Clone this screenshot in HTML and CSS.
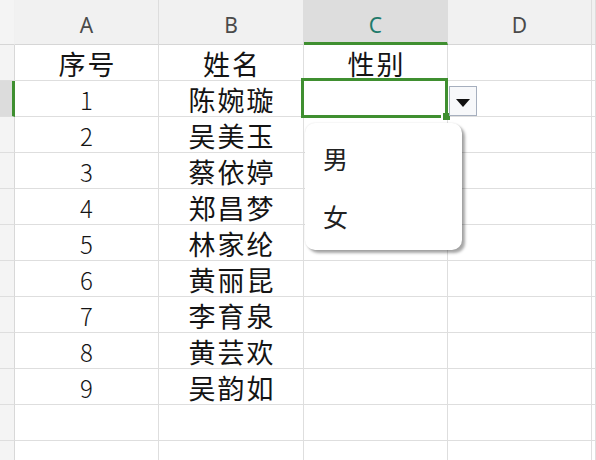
FILE: index.html
```html
<!DOCTYPE html>
<html lang="zh-CN">
<head>
<meta charset="utf-8">
<title>性别下拉</title>
<link rel="stylesheet" href="styles.css">
</head>
<body>
<div class="sheet">
  <div class="row head">
    <div class="rh"></div>
    <div class="ch">A</div>
    <div class="ch">B</div>
    <div class="ch active">C</div>
    <div class="ch">D</div>
    <div class="ch"></div>
  </div>
  <div class="row">
    <div class="rh"></div>
    <div class="cell">序号</div>
    <div class="cell">姓名</div>
    <div class="cell">性别</div>
    <div class="cell"></div>
    <div class="cell"></div>
  </div>
  <div class="row">
    <div class="rh cur"></div>
    <div class="cell num">1</div>
    <div class="cell">陈婉璇</div>
    <div class="cell sel"><span class="handle"></span></div>
    <div class="cell"><span class="dd"><span class="tri"></span></span></div>
    <div class="cell"></div>
  </div>
  <div class="row"><div class="rh"></div><div class="cell num">2</div><div class="cell">吴美玉</div><div class="cell"></div><div class="cell"></div><div class="cell"></div></div>
  <div class="row"><div class="rh"></div><div class="cell num">3</div><div class="cell">蔡依婷</div><div class="cell"></div><div class="cell"></div><div class="cell"></div></div>
  <div class="row"><div class="rh"></div><div class="cell num">4</div><div class="cell">郑昌梦</div><div class="cell"></div><div class="cell"></div><div class="cell"></div></div>
  <div class="row"><div class="rh"></div><div class="cell num">5</div><div class="cell">林家纶</div><div class="cell"></div><div class="cell"></div><div class="cell"></div></div>
  <div class="row"><div class="rh"></div><div class="cell num">6</div><div class="cell">黄丽昆</div><div class="cell"></div><div class="cell"></div><div class="cell"></div></div>
  <div class="row"><div class="rh"></div><div class="cell num">7</div><div class="cell">李育泉</div><div class="cell"></div><div class="cell"></div><div class="cell"></div></div>
  <div class="row"><div class="rh"></div><div class="cell num">8</div><div class="cell">黄芸欢</div><div class="cell"></div><div class="cell"></div><div class="cell"></div></div>
  <div class="row"><div class="rh"></div><div class="cell num">9</div><div class="cell">吴韵如</div><div class="cell"></div><div class="cell"></div><div class="cell"></div></div>
  <div class="row"><div class="rh"></div><div class="cell"></div><div class="cell"></div><div class="cell"></div><div class="cell"></div><div class="cell"></div></div>
  <div class="row"><div class="rh"></div><div class="cell"></div><div class="cell"></div><div class="cell"></div><div class="cell"></div><div class="cell"></div></div>
</div>
<div class="menu">
  <div class="item">男</div>
  <div class="item">女</div>
</div>
</body>
</html>
```
FILE: styles.css
```css
html, body {
  margin: 0;
  padding: 0;
  background: #ffffff;
  overflow: hidden;
}
body {
  width: 596px;
  height: 460px;
  position: relative;
  font-family: "Noto Sans CJK SC", "Noto Sans", sans-serif;
  color: #141414;
}
.sheet {
  display: flex;
  flex-direction: column;
}
.row {
  display: grid;
  grid-template-columns: 15px 144px 145px 144px 144px 4px;
  grid-template-rows: 36px;
  height: 36px;
  flex: none;
}
.row.head {
  grid-template-rows: 45px;
  height: 45px;
}
.rh, .cell, .ch {
  box-sizing: border-box;
  border-right: 1px solid #dedede;
  border-bottom: 1px solid #dedede;
  min-height: 0;
}
.rh {
  background: #f4f4f4;
  border-right-color: #d8d8d8;
}
.rh.cur {
  background: #dcdcdc;
  border-right: 3px solid #3f8f30;
}
.head .rh {
  border-right-color: #f0f0f0;
  border-bottom-color: #d6d6d6;
}
.ch {
  background: #f1f1f1;
  border-bottom-color: #d6d6d6;
  border-right-color: #dddddd;
  display: flex;
  align-items: center;
  justify-content: center;
  padding-top: 6px;
  font-family: "Noto Sans", sans-serif;
  font-size: 21px;
  color: #4a4a4a;
}
.ch.active {
  background: #dddddd;
  color: #1f7a6b;
  border-bottom: 3px solid #3f8f30;
  padding-top: 8px;
}
.cell {
  background: #ffffff;
  text-align: center;
  font-size: 27px;
  line-height: 33px;
  padding-top: 2px;
  padding-left: 2px;
  letter-spacing: 2px;
  white-space: nowrap;
  position: relative;
}
.cell.num {
  font-size: 24px;
  letter-spacing: 0;
  padding-left: 0;
  font-weight: 300;
}
.cell.sel::after {
  content: "";
  position: absolute;
  left: -3px;
  top: -3px;
  right: -1px;
  bottom: -2px;
  border: 3px solid #3f8f30;
  z-index: 2;
}
.handle {
  position: absolute;
  right: -3px;
  bottom: -4px;
  width: 7px;
  height: 7px;
  background: #3f8f30;
  border-left: 2px solid #ffffff;
  z-index: 3;
}
.dd {
  position: absolute;
  left: 1px;
  top: 5px;
  width: 28px;
  height: 30px;
  box-sizing: border-box;
  border: 1px solid #a6afbe;
  background: #f7f8fa;
  display: flex;
  align-items: center;
  justify-content: center;
  z-index: 3;
}
.tri {
  width: 0;
  height: 0;
  margin-top: 4px;
  border-left: 7px solid transparent;
  border-right: 7px solid transparent;
  border-top: 8px solid #111111;
}
.menu {
  position: absolute;
  left: 305px;
  top: 123px;
  width: 157px;
  height: 127px;
  box-sizing: border-box;
  background: #ffffff;
  border-radius: 10px;
  box-shadow: 3px 3px 3px rgba(0, 0, 0, 0.35), 0 0 2px rgba(0, 0, 0, 0.12);
  padding: 12px 0;
  display: flex;
  flex-direction: column;
  gap: 12px;
  z-index: 5;
}
.item {
  height: 46px;
  line-height: 46px;
  padding-left: 18px;
  font-size: 25px;
  color: #222222;
}
```
